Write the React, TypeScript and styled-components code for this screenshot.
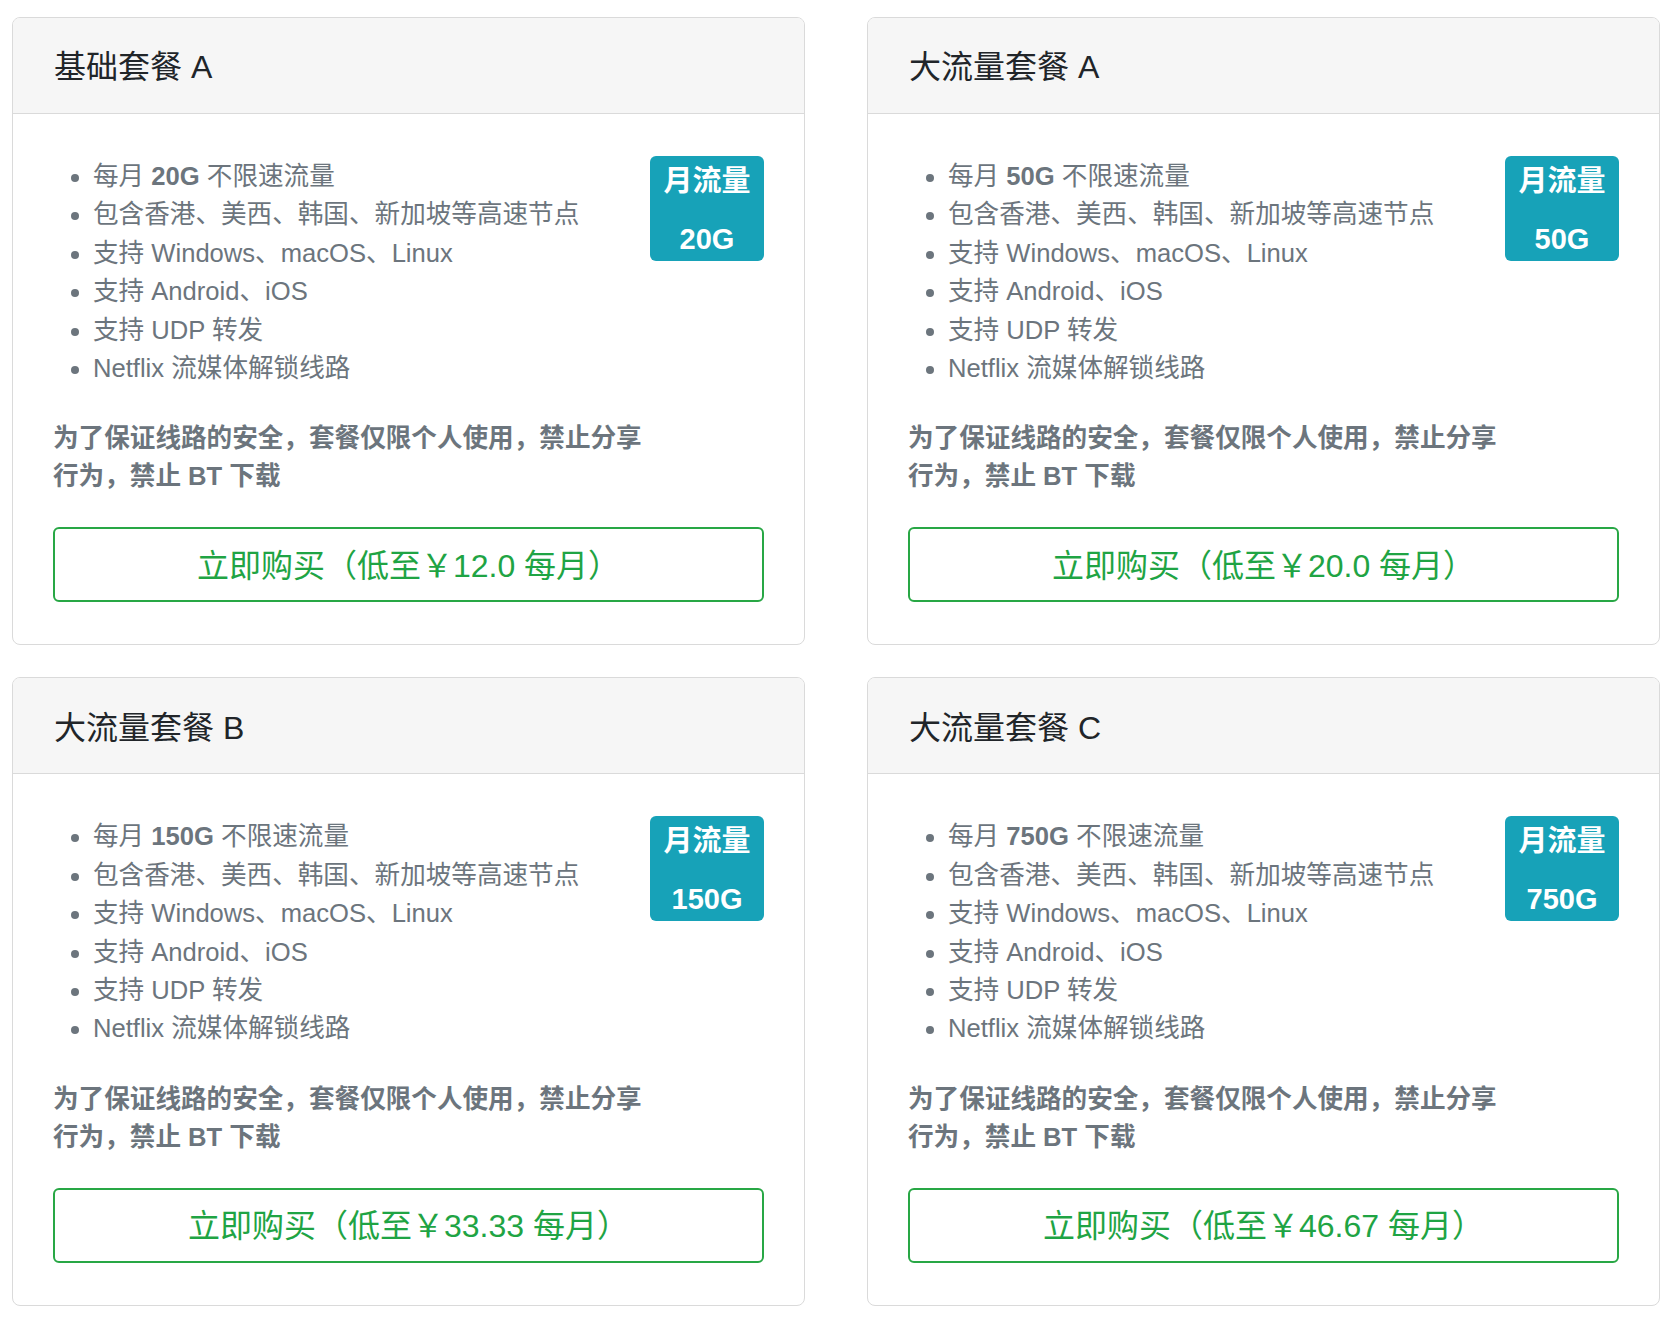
import React from "react";
import styled, { createGlobalStyle } from "styled-components";

const GlobalStyle = createGlobalStyle`
  html, body {
    margin: 0;
    padding: 0;
    background: #ffffff;
  }
  body {
    font-family: "Liberation Sans", "Noto Sans CJK SC", sans-serif;
    -webkit-font-smoothing: antialiased;
  }
`;

const Page = styled.div`
  display: grid;
  grid-template-columns: 793px 793px;
  column-gap: 62px;
  row-gap: 32px;
  padding: 17px 10px 13px 12px;
`;

const Card = styled.div`
  border: 1px solid #dadada;
  border-radius: 8px;
  background: #ffffff;
  overflow: hidden;
  display: flex;
  flex-direction: column;
`;

const CardHeader = styled.div`
  height: 96px;
  box-sizing: border-box;
  display: flex;
  align-items: center;
  padding: 4px 41px 0;
  background: #f6f6f6;
  border-bottom: 1px solid #dadada;
`;

const Title = styled.h3`
  margin: 0;
  font-size: 32px;
  font-weight: 400;
  color: #212529;
  line-height: 1.2;
`;

const CardBody = styled.div`
  padding: 43px 40px 42px 40px;
  display: flex;
  flex-direction: column;
`;

const TopRow = styled.div`
  display: flex;
  align-items: flex-start;
`;

const InfoColumn = styled.div`
  flex: 1;
  min-width: 0;
`;

const FeatureList = styled.ul`
  margin: 0;
  padding: 0 0 0 40px;
  list-style: disc;
  color: #6c757d;
  font-size: 25.6px;
  line-height: 38.4px;
`;

const Feature = styled.li`
  b {
    font-weight: 700;
  }
`;

const Notice = styled.p`
  margin: 32px 0 0;
  color: #6c757d;
  font-size: 25.6px;
  font-weight: 700;
  line-height: 38px;
`;

const Badge = styled.div`
  flex: none;
  width: 114px;
  height: 105px;
  margin-top: -1px;
  box-sizing: border-box;
  padding: 3px 0 1px;
  border-radius: 6px;
  background: #17a2b8;
  color: #ffffff;
  font-weight: 700;
  font-size: 29px;
  display: flex;
  flex-direction: column;
  align-items: center;
  gap: 14px;
`;

const BadgeLine = styled.span`
  display: block;
  line-height: 44px;
`;

const BuyButton = styled.button`
  margin-top: 32px;
  width: 100%;
  height: 75px;
  padding: 0 0 4px;
  border: 2px solid #28a745;
  border-radius: 6px;
  background: transparent;
  color: #1fa444;
  font-family: "Liberation Sans", "Noto Sans CJK SC", sans-serif;
  font-size: 32px;
  font-weight: 400;
  cursor: pointer;
`;

type Plan = {
  name: string;
  traffic: string;
  price: string;
};

const plans: Plan[] = [
  { name: "基础套餐 A", traffic: "20G", price: "12.0" },
  { name: "大流量套餐 A", traffic: "50G", price: "20.0" },
  { name: "大流量套餐 B", traffic: "150G", price: "33.33" },
  { name: "大流量套餐 C", traffic: "750G", price: "46.67" },
];

const PlanCard: React.FC<{ plan: Plan }> = ({ plan }) => (
  <Card>
    <CardHeader>
      <Title>{plan.name}</Title>
    </CardHeader>
    <CardBody>
      <TopRow>
        <InfoColumn>
          <FeatureList>
            <Feature>
              每月 <b>{plan.traffic}</b> 不限速流量
            </Feature>
            <Feature>包含香港、美西、韩国、新加坡等高速节点</Feature>
            <Feature>支持 Windows、macOS、Linux</Feature>
            <Feature>支持 Android、iOS</Feature>
            <Feature>支持 UDP 转发</Feature>
            <Feature>Netflix 流媒体解锁线路</Feature>
          </FeatureList>
          <Notice>为了保证线路的安全，套餐仅限个人使用，禁止分享行为，禁止 BT 下载</Notice>
        </InfoColumn>
        <Badge>
          <BadgeLine>月流量</BadgeLine>
          <BadgeLine>{plan.traffic}</BadgeLine>
        </Badge>
      </TopRow>
      <BuyButton>立即购买（低至￥{plan.price} 每月）</BuyButton>
    </CardBody>
  </Card>
);

export default function App() {
  return (
    <>
      <GlobalStyle />
      <Page>
        {plans.map((p) => (
          <PlanCard key={p.name} plan={p} />
        ))}
      </Page>
    </>
  );
}
